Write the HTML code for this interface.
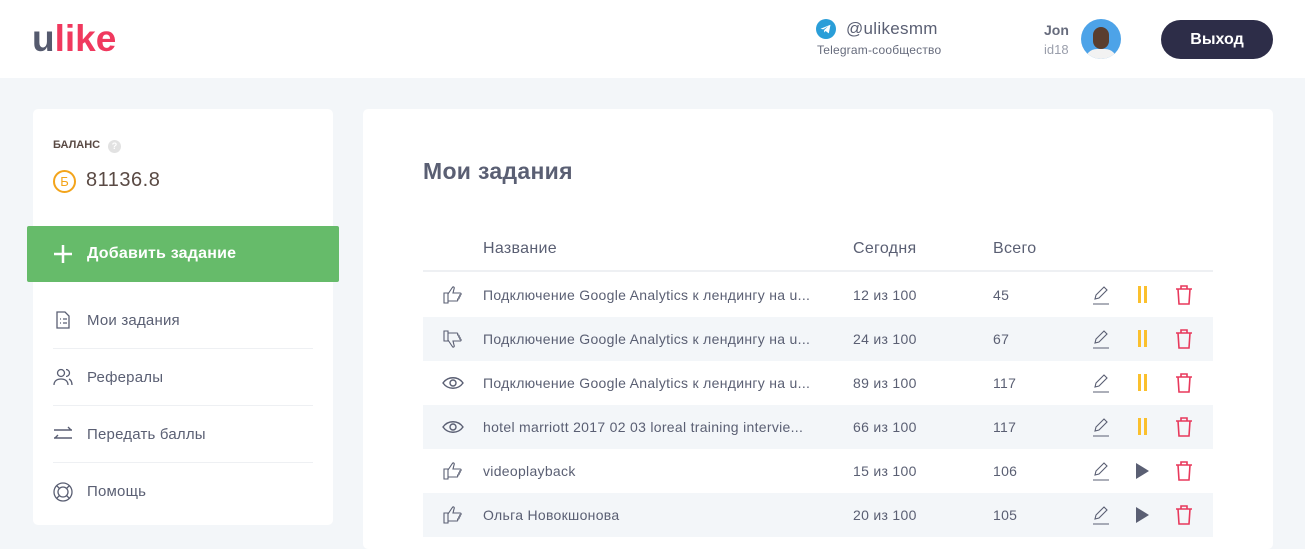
<!DOCTYPE html>
<html><head><meta charset="utf-8"><style>
*{margin:0;padding:0;box-sizing:border-box}
body{width:1305px;height:541px;overflow:hidden;background:#f3f6f9;font-family:"Liberation Sans","DejaVu Sans",sans-serif;color:#5a5f73;position:relative}
.abs{position:absolute}
header{position:absolute;left:0;top:0;width:1305px;height:78px;background:#fff}
.logo{left:32px;top:18px;font-size:37px;font-weight:bold;letter-spacing:0px}
.card{background:#fff;border-radius:5px}
.menu{left:53px;width:260px;height:57px;border-bottom:1px solid #eef0f3;font-size:15px;display:flex;align-items:center;letter-spacing:0.2px}
.menu svg{margin-right:14px}
.row{position:absolute;left:423px;width:790px;height:44px;font-size:14px;color:#5a5f73;letter-spacing:0.3px}
.row span{position:absolute;top:14px}
.row.s{background:#f3f6f9}
</style></head><body>
<header>
<div class="abs logo"><span style="color:#555a6e">u</span><span style="color:#f0395e">like</span></div>
<svg class="abs" style="left:816px;top:19px" width="20" height="20" viewBox="0 0 20 20"><circle cx="10" cy="10" r="10" fill="#2a9ed8"/><path d="M4.5 9.8l10-4-1.7 8.6-3.2-2.4-1.6 1.5.2-2.5 4-3.7-5 3.1-2.7-.6z" fill="#fff"/></svg>
<div class="abs" style="left:846px;top:19px;font-size:17px;color:#5a5f73;letter-spacing:0.3px">@ulikesmm</div>
<div class="abs" style="left:817px;top:43px;font-size:12px;color:#666b7c;letter-spacing:0.2px">Telegram-сообщество</div>
<div class="abs" style="left:1044px;top:22px;font-size:14px;font-weight:bold;color:#666b7c">Jon</div>
<div class="abs" style="left:1044px;top:42px;font-size:13px;color:#9a9eab">id18</div>
<div class="abs" style="left:1081px;top:19px;width:40px;height:40px;border-radius:50%;background:#4da3e8;overflow:hidden"><div style="position:absolute;left:12px;top:8px;width:16px;height:22px;border-radius:8px;background:#5a3e2e"></div><div style="position:absolute;left:4px;top:30px;width:32px;height:14px;border-radius:12px 12px 0 0;background:#f2f2f2"></div></div>
<div class="abs" style="left:1161px;top:20px;width:112px;height:39px;border-radius:20px;background:#2d2d48;color:#fff;font-size:16px;font-weight:bold;text-align:center;line-height:39px">Выход</div>
</header>

<div class="abs card" style="left:33px;top:109px;width:300px;height:416px"></div>
<div class="abs" style="left:53px;top:139px;font-size:11px;font-weight:bold;color:#5a4a44">БАЛАНС</div>
<div class="abs" style="left:108px;top:140px;width:13px;height:13px;border-radius:50%;background:#e2e2e2;color:#fff;font-size:9px;text-align:center;line-height:13px;font-weight:bold">?</div>
<div class="abs" style="left:53px;top:170px;width:23px;height:23px;border-radius:50%;border:2px solid #f3a41b;color:#f3a41b;font-size:13px;text-align:center;line-height:19px">Б</div>
<div class="abs" style="left:86px;top:169px;font-size:20px;color:#5a4a44;letter-spacing:0.5px">81136.8</div>
<div class="abs" style="left:27px;top:226px;width:312px;height:56px;background:#66bb6a;border-radius:2px;color:#fff;font-size:16px;font-weight:bold;line-height:56px;padding-left:60px;letter-spacing:0.2px">Добавить задание</div>
<svg class="abs" style="left:53px;top:244px" width="20" height="20"><path d="M10 1v18M1 10h18" stroke="#fff" stroke-width="2.5"/></svg>

<div class="abs menu" style="top:292px"><svg width="20" height="20" viewBox="0 0 20 20" fill="none" stroke="#5a5f73" stroke-width="1.3"><path d="M4 2h8l4 4v12H4z"/><path d="M7 9h1M10 9h4M7 13h1M10 13h4"/></svg>Мои задания</div>
<div class="abs menu" style="top:349px"><svg width="20" height="20" viewBox="0 0 20 20" fill="none" stroke="#5a5f73" stroke-width="1.3"><circle cx="8" cy="6" r="3.5"/><path d="M1 18c0-4 3-6 7-6s7 2 7 6M13 2.5a3.5 3.5 0 010 7M16 12c2 1 3 3 3 6"/></svg>Рефералы</div>
<div class="abs menu" style="top:406px"><svg width="20" height="20" viewBox="0 0 20 20" fill="none" stroke="#5a5f73" stroke-width="1.4"><path d="M1 6h18M15 3l3 3M1 14h18M5 11l-3 3"/></svg>Передать баллы</div>
<div class="abs menu" style="top:463px;border:none"><svg width="20" height="20" viewBox="0 0 20 20" fill="none" stroke="#5a5f73" stroke-width="1.3"><circle cx="10" cy="10" r="9"/><circle cx="10" cy="10" r="5"/><path d="M4 4l2.5 2.5M16 4l-2.5 2.5M4 16l2.5-2.5M16 16l-2.5-2.5"/></svg>Помощь</div>

<div class="abs card" style="left:363px;top:109px;width:910px;height:440px"></div>
<div class="abs" style="left:423px;top:158px;font-size:23px;font-weight:bold;color:#5a5f73;letter-spacing:0.3px">Мои задания</div>
<div class="abs" style="left:483px;top:240px;font-size:16px;color:#5a5f73;letter-spacing:0.3px">Название</div>
<div class="abs" style="left:853px;top:240px;font-size:16px;color:#5a5f73;letter-spacing:0.3px">Сегодня</div>
<div class="abs" style="left:993px;top:240px;font-size:16px;color:#5a5f73;letter-spacing:0.3px">Всего</div>
<div class="abs" style="left:423px;top:270px;width:790px;height:2px;background:#eef0f3"></div>

<svg width="0" height="0" style="position:absolute"><defs>
<g id="up" fill="none" stroke="#5a5f73" stroke-width="1.1"><path d="M2 9h4v10H2zM6 10l4-6c1-2 3-1 2 1l-1 4h7c1.5 0 1.5 2 0 2h-1c1.5 0 1.5 2 0 2h-1c1.5 0 1.5 2 0 2h-1c1 0 1 2 0 2H6"/></g>
<g id="dn" transform="translate(0,22) scale(1,-1)"><use href="#up"/></g>
<g id="eye" fill="none" stroke="#5a5f73" stroke-width="1.4"><path d="M1 11c5-7 15-7 20 0-5 7-15 7-20 0z"/><circle cx="11" cy="11" r="3"/></g>
<g id="ed" fill="none" stroke="#5a5f73" stroke-width="1.1"><path d="M4 15l1-4 8-8 3 3-8 8zM2 20h16"/></g>
<g id="pa" fill="#fbc02d"><rect x="4" y="2" width="3" height="17"/><rect x="10" y="2" width="3" height="17"/></g>
<g id="pl" fill="#5a5f73"><path d="M4 3l13 8-13 8z"/></g>
<g id="tr" fill="none" stroke="#e8395c" stroke-width="1.6"><path d="M3 5h16M8 5V2h6v3M5 5l1 15h10l1-15"/></g>
</defs></svg>

<div class="row" style="top:273px"><svg style="position:absolute;left:19px;top:11px" width="22" height="22"><use href="#up"/></svg><span style="left:60px">Подключение Google Analytics к лендингу на u...</span><span style="left:430px">12 из 100</span><span style="left:570px">45</span><svg style="position:absolute;left:668px;top:11px" width="22" height="22"><use href="#ed"/></svg><svg style="position:absolute;left:711px;top:11px" width="22" height="22"><use href="#pa"/></svg><svg style="position:absolute;left:750px;top:11px" width="22" height="22"><use href="#tr"/></svg></div>
<div class="row s" style="top:317px"><svg style="position:absolute;left:19px;top:11px" width="22" height="22"><use href="#dn"/></svg><span style="left:60px">Подключение Google Analytics к лендингу на u...</span><span style="left:430px">24 из 100</span><span style="left:570px">67</span><svg style="position:absolute;left:668px;top:11px" width="22" height="22"><use href="#ed"/></svg><svg style="position:absolute;left:711px;top:11px" width="22" height="22"><use href="#pa"/></svg><svg style="position:absolute;left:750px;top:11px" width="22" height="22"><use href="#tr"/></svg></div>
<div class="row" style="top:361px"><svg style="position:absolute;left:19px;top:11px" width="22" height="22"><use href="#eye"/></svg><span style="left:60px">Подключение Google Analytics к лендингу на u...</span><span style="left:430px">89 из 100</span><span style="left:570px">117</span><svg style="position:absolute;left:668px;top:11px" width="22" height="22"><use href="#ed"/></svg><svg style="position:absolute;left:711px;top:11px" width="22" height="22"><use href="#pa"/></svg><svg style="position:absolute;left:750px;top:11px" width="22" height="22"><use href="#tr"/></svg></div>
<div class="row s" style="top:405px"><svg style="position:absolute;left:19px;top:11px" width="22" height="22"><use href="#eye"/></svg><span style="left:60px">hotel marriott 2017 02 03 loreal training intervie...</span><span style="left:430px">66 из 100</span><span style="left:570px">117</span><svg style="position:absolute;left:668px;top:11px" width="22" height="22"><use href="#ed"/></svg><svg style="position:absolute;left:711px;top:11px" width="22" height="22"><use href="#pa"/></svg><svg style="position:absolute;left:750px;top:11px" width="22" height="22"><use href="#tr"/></svg></div>
<div class="row" style="top:449px"><svg style="position:absolute;left:19px;top:11px" width="22" height="22"><use href="#up"/></svg><span style="left:60px">videoplayback</span><span style="left:430px">15 из 100</span><span style="left:570px">106</span><svg style="position:absolute;left:668px;top:11px" width="22" height="22"><use href="#ed"/></svg><svg style="position:absolute;left:709px;top:11px" width="22" height="22"><use href="#pl"/></svg><svg style="position:absolute;left:750px;top:11px" width="22" height="22"><use href="#tr"/></svg></div>
<div class="row s" style="top:493px"><svg style="position:absolute;left:19px;top:11px" width="22" height="22"><use href="#up"/></svg><span style="left:60px">Ольга Новокшонова</span><span style="left:430px">20 из 100</span><span style="left:570px">105</span><svg style="position:absolute;left:668px;top:11px" width="22" height="22"><use href="#ed"/></svg><svg style="position:absolute;left:709px;top:11px" width="22" height="22"><use href="#pl"/></svg><svg style="position:absolute;left:750px;top:11px" width="22" height="22"><use href="#tr"/></svg></div>
</body></html>
